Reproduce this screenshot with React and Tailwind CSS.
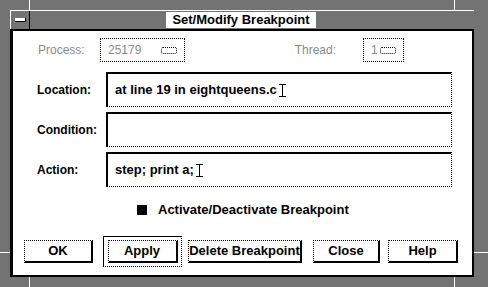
import React from "react";

const font = "font-['Liberation_Sans',Arial,sans-serif]";

function IBeam() {
  return (
    <svg width="7" height="13" viewBox="0 0 7 13" className="ml-[2px]">
      <path d="M0 0.5H7M3.5 0.5V12.5M0 12.5H7" stroke="#000" strokeWidth="1" fill="none" />
    </svg>
  );
}

function Field({ label, value }) {
  return (
    <div className="flex items-center">
      <span className="w-[69px] pl-[24px] box-content text-[12px] font-bold">{label}</span>
      <div className="w-[346px] h-[35px] flex items-center pl-[7px] border-t-2 border-l-2 border-r border-b border-black [border-right-style:dotted] [border-bottom-style:dotted]">
        {value && <span className="text-[13px] font-bold">{value}</span>}
        {value && <IBeam />}
      </div>
    </div>
  );
}

function Button({ children, className = "" }) {
  return (
    <button
      className={
        "h-[23px] flex items-center justify-center text-[13px] font-bold border-t border-l border-r-2 border-b-2 border-black border-dotted [border-right-style:solid] [border-bottom-style:solid] " +
        className
      }
    >
      {children}
    </button>
  );
}

function Option({ value, width }) {
  return (
    <div
      className={
        "h-[24px] flex items-center border border-dotted border-black px-[7px] text-[12px] text-[#8a8a8a] " +
        width
      }
    >
      <span className="flex-1">{value}</span>
      <span className="w-[16px] h-[7px] border border-dotted border-black rounded-[2px]" />
    </div>
  );
}

export default function App() {
  return (
    <div className={`w-[488px] h-[287px] flex flex-col bg-neutral-500 ${font} text-black`}>
      {/* top frame band */}
      <div className="h-[10px] flex">
        <div className="w-[30px] border-r border-white" />
        <div className="flex-1" />
        <div className="w-[34px] border-l border-white" />
      </div>

      <div className="flex-1 flex">
        <div className="w-[10px] flex flex-col">
          <div className="h-[20px]" />
          <div className="flex-1" />
          <div className="h-[25px] border-t border-white" />
        </div>

        <div className="flex-1 flex flex-col">
          {/* title bar */}
          <div className="h-[19px] flex border-t border-l border-white">
            <div className="w-[19px] flex items-center justify-center border-r border-black">
              <div className="w-[11px] h-[4px] bg-white border-r border-b border-black" />
            </div>
            <div className="flex-1 flex items-center justify-center pr-[22px]">
              <span className="bg-white px-[6px] h-[16px] flex items-center text-[13px] font-bold">
                Set/Modify Breakpoint
              </span>
            </div>
          </div>

          {/* dialog body */}
          <div className="flex-1 bg-white border-t-2 border-l-[3px] border-r-2 border-b-2 border-black flex flex-col">
            <div className="mt-[7px] flex items-center">
              <span className="ml-[25px] w-[62px] text-[12px] text-[#8a8a8a]">Process:</span>
              <Option value="25179" width="w-[85px]" />
              <span className="ml-auto text-[12px] text-[#8a8a8a]">Thread:</span>
              <div className="ml-[27px] mr-[68px]">
                <Option value="1" width="w-[41px]" />
              </div>
            </div>

            <div className="mt-[10px] flex flex-col gap-[5px]">
              <Field label="Location:" value="at line 19 in eightqueens.c" />
              <Field label="Condition:" value="" />
              <Field label="Action:" value="step; print a;" />
            </div>

            <div className="mt-[13px] flex items-center pl-[124px]">
              <span className="w-[10px] h-[10px] bg-black" />
              <span className="ml-[11px] text-[13px] font-bold">Activate/Deactivate Breakpoint</span>
            </div>

            <div className="mt-[16px] flex items-center">
              <Button className="ml-[11px] w-[69px]">OK</Button>
              <div className="ml-[10px] w-[79px] h-[31px] flex items-center justify-center border border-black [border-right-style:dotted] [border-bottom-style:dotted]">
                <Button className="w-[70px]">Apply</Button>
              </div>
              <Button className="ml-[6px] w-[114px]">Delete Breakpoint</Button>
              <Button className="ml-[11px] w-[67px]">Close</Button>
              <Button className="ml-[8px] w-[70px]">Help</Button>
            </div>
          </div>
        </div>

        <div className="w-[14px] flex flex-col">
          <div className="h-[20px]" />
          <div className="flex-1" />
          <div className="h-[25px] border-t border-white" />
        </div>
      </div>

      {/* bottom frame band */}
      <div className="h-[10px] flex">
        <div className="w-[30px] border-r border-white" />
        <div className="flex-1" />
        <div className="w-[34px] border-l border-white" />
      </div>
    </div>
  );
}
